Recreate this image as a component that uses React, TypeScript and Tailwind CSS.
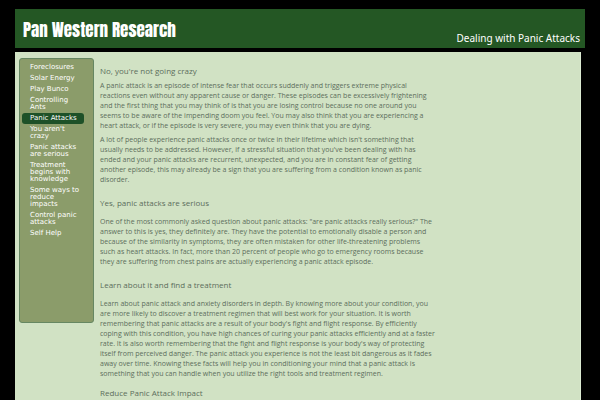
const navItems = [
  'Foreclosures',
  'Solar Energy',
  'Play Bunco',
  'Controlling Ants',
  'Panic Attacks',
  "You aren't crazy",
  'Panic attacks are serious',
  'Treatment begins with knowledge',
  'Some ways to reduce impacts',
  'Control panic attacks',
  'Self Help',
]

const sections = [
  {
    title: "No, you're not going crazy",
    spacing: 'mb-1',
    paragraphs: [
      'A panic attack is an episode of intense fear that occurs suddenly and triggers extreme physical reactions even without any apparent cause or danger. These episodes can be excessively frightening and the first thing that you may think of is that you are losing control because no one around you seems to be aware of the impending doom you feel. You may also think that you are experiencing a heart attack, or if the episode is very severe, you may even think that you are dying.',
      "A lot of people experience panic attacks once or twice in their lifetime which isn't something that usually needs to be addressed. However, if a stressful situation that you've been dealing with has ended and your panic attacks are recurrent, unexpected, and you are in constant fear of getting another episode, this may already be a sign that you are suffering from a condition known as panic disorder.",
    ],
  },
  {
    title: 'Yes, panic attacks are serious',
    spacing: 'mt-3 mb-2',
    paragraphs: [
      'One of the most commonly asked question about panic attacks: "are panic attacks really serious?" The answer to this is yes, they definitely are. They have the potential to emotionally disable a person and because of the similarity in symptoms, they are often mistaken for other life-threatening problems such as heart attacks. In fact, more than 20 percent of people who go to emergency rooms because they are suffering from chest pains are actually experiencing a panic attack episode.',
    ],
  },
  {
    title: 'Learn about it and find a treatment',
    spacing: 'mt-3 mb-2',
    paragraphs: [
      "Learn about panic attack and anxiety disorders in depth. By knowing more about your condition, you are more likely to discover a treatment regimen that will best work for your situation. It is worth remembering that panic attacks are a result of your body's fight and flight response. By efficiently coping with this condition, you have high chances of curing your panic attacks efficiently and at a faster rate. It is also worth remembering that the fight and flight response is your body's way of protecting itself from perceived danger. The panic attack you experience is not the least bit dangerous as it fades away over time. Knowing these facts will help you in conditioning your mind that a panic attack is something that you can handle when you utilize the right tools and treatment regimen.",
    ],
  },
  {
    title: 'Reduce Panic Attack Impact',
    spacing: 'mt-2',
    paragraphs: [],
  },
]

function Sidebar() {
  return (
    <nav className="w-[75px] min-h-[265px] shrink-0 rounded-[3px] border border-[#668762] bg-[#8b9c6a] px-[2px] py-[3px] font-['DejaVu_Sans',sans-serif] text-[7px] leading-[7px] text-white">
      <ul>
        {navItems.map((item) => (
          <li key={item}>
            <a
              href="#"
              className={`block mr-[7px] rounded-[3px] py-[2px] pl-2 pr-1 ${item === 'Panic Attacks' ? 'bg-[#1e5128]' : ''}`}
            >
              {item}
            </a>
          </li>
        ))}
      </ul>
    </nav>
  )
}

export default function App() {
  return (
    <div className="h-screen overflow-hidden bg-black px-[15px] pt-[9px] font-['Open_Sans',sans-serif]">
      <header className="flex h-[39px] items-end justify-between bg-[#245724] pl-2 pr-[5px] text-white">
        <h1 className="self-center pt-[2px] font-['Impact','Anton','Roboto',sans-serif] text-[17px] leading-5 font-normal">
          Pan Western Research
        </h1>
        <p className="pb-[3px] font-['Noto_Sans',sans-serif] text-[10px] leading-[14px]">Dealing with Panic Attacks</p>
      </header>
      <div className="mt-1 mr-1 flex min-h-full items-start gap-[6px] border-r border-[#dcebd2] bg-[#d1e2c4] pt-[6px] pl-1">
        <Sidebar />
        <main className="max-w-[337px] pt-[7px] text-[#5c6e5c]">
          {sections.map(({ title, spacing, paragraphs }) => (
            <section key={title}>
              <h2 className={`text-[8px] leading-3 ${spacing}`}>{title}</h2>
              {paragraphs.map((text) => (
                <p key={text} className="mb-1 text-[7px] leading-[10px]">
                  {text}
                </p>
              ))}
            </section>
          ))}
        </main>
      </div>
    </div>
  )
}
